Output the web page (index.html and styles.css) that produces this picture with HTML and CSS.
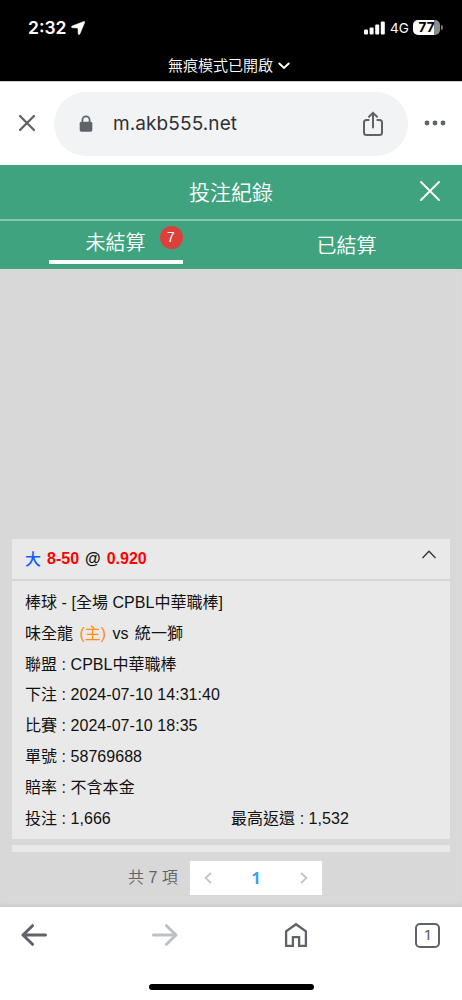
FILE: index.html
```html
<!DOCTYPE html>
<html lang="zh-Hant">
	<head>
		<meta charset="utf-8" />
		<meta name="viewport" content="width=device-width, initial-scale=1">
		<title>投注紀錄</title>
		<link rel="stylesheet" href="styles.css">
	</head>
	<body>
		<div class="status">
			<div class="status-top">
				<span class="time">2:32</span>
				<svg class="location" width="14" height="14" viewBox="0 0 14 14"><path d="M12.8 .5L1 5Q-.2 5.9 1 6.7L6.9 7.1L7.2 13Q7.9 14.3 8.9 13L13.7 1.4Q13.8 .2 12.8 .5Z" fill="#fff" stroke="#fff" stroke-width=".5"/></svg>
				<svg class="signal" width="21" height="14" viewBox="0 0 21 14" fill="#fff">
					<rect x="0" y="8.6" width="4" height="4.8" rx="1"/>
					<rect x="5.6" y="6.4" width="4" height="7" rx="1"/>
					<rect x="11.2" y="3.4" width="4" height="10" rx="1"/>
					<rect x="16.8" y="0.6" width="4" height="12.8" rx="1"/>
				</svg>
				<span class="net">4G</span>
				<div class="battery">77</div>
				<i class="battery-cap"></i>
			</div>
			<div class="private">
				<span>無痕模式已開啟</span>
				<svg width="12" height="8" viewBox="0 0 12 8"><path d="M1.3 1.5L6 6L10.7 1.5" fill="none" stroke="#fff" stroke-width="1.9" stroke-linecap="round"/></svg>
			</div>
		</div>

		<div class="address">
			<svg class="stop" width="18" height="18" viewBox="0 0 18 18"><path d="M2 2L16 16M16 2L2 16" stroke="#5f6368" stroke-width="2.3" stroke-linecap="round"/></svg>
			<div class="url">
				<svg class="lock" width="14" height="18" viewBox="0 0 14 18">
					<path d="M3.4 8V5a3.6 3.6 0 0 1 7.2 0V8" fill="none" stroke="#5f6368" stroke-width="1.7"/>
					<rect x=".7" y="6.7" width="12.6" height="10" rx="1.6" fill="#5f6368"/>
				</svg>
				<span>m.akb555.net</span>
				<svg class="share" width="20" height="26" viewBox="0 0 20 26" fill="none" stroke="#5f6368" stroke-width="2">
					<path d="M6.4 9H3.5Q1 9 1 11.5V21.5Q1 24 3.5 24H16.5Q19 24 19 21.5V11.5Q19 9 16.5 9H13.6"/>
					<path d="M10 16.5V2M6 5.8L10 1.8L14 5.8" stroke-linecap="round"/>
				</svg>
			</div>
			<svg class="more" width="22" height="6" viewBox="0 0 22 6" fill="#5f6368"><circle cx="3" cy="3" r="2.4"/><circle cx="11" cy="3" r="2.4"/><circle cx="19" cy="3" r="2.4"/></svg>
		</div>

		<div class="header">
			<span>投注紀錄</span>
			<svg class="close" width="20" height="20" viewBox="0 0 20 20"><path d="M1 1L19 19M19 1L1 19" stroke="#fff" stroke-width="1.8" stroke-linecap="round"/></svg>
		</div>
		<div class="tabs">
			<div class="tab on"><span>未結算</span><em class="badge">7</em></div>
			<div class="tab"><span>已結算</span></div>
		</div>

		<div class="list">
			<div class="bet">
				<div class="bet-title">
					<span class="blue">大</span>
					<span class="red">8-50</span>
					<span>@</span>
					<span class="red">0.920</span>
					<svg class="fold" width="14" height="9" viewBox="0 0 14 9"><path d="M.5 8L7 1.3L13.5 8" fill="none" stroke="#333" stroke-width="1.3"/></svg>
				</div>
				<div class="bet-body">
					<p>棒球 - [全場 CPBL中華職棒]</p>
					<p class="match">味全龍 <span class="home">(主)</span> vs 統一獅</p>
					<p>聯盟 : CPBL中華職棒</p>
					<p>下注 : 2024-07-10 14:31:40</p>
					<p>比賽 : 2024-07-10 18:35</p>
					<p>單號 : 58769688</p>
					<p>賠率 : 不含本金</p>
					<p class="money"><span>投注 : 1,666</span><span>最高返還 : 1,532</span></p>
				</div>
			</div>
			<div class="strip"></div>
			<div class="pages">
				<span class="total">共 7 項</span>
				<div class="pager">
					<svg width="8" height="12" viewBox="0 0 8 12"><path d="M7 1L1.5 6L7 11" fill="none" stroke="#c0c4cc" stroke-width="1.7"/></svg>
					<b>1</b>
					<svg width="8" height="12" viewBox="0 0 8 12"><path d="M1 1L6.5 6L1 11" fill="none" stroke="#c0c4cc" stroke-width="1.7"/></svg>
				</div>
			</div>
		</div>

		<div class="toolbar">
			<div class="tools">
				<svg width="26" height="22" viewBox="0 0 26 22"><path d="M24.5 11H2M11.5 1.7L2 11L11.5 20.3" fill="none" stroke="#5f6368" stroke-width="3" stroke-linecap="round" stroke-linejoin="round"/></svg>
				<svg width="26" height="22" viewBox="0 0 26 22"><path d="M1.5 11H24M14.5 1.7L24 11L14.5 20.3" fill="none" stroke="#bdc1c6" stroke-width="3" stroke-linecap="round" stroke-linejoin="round"/></svg>
				<svg class="house" width="24" height="26" viewBox="0 0 24 26"><path d="M2.1 23.9V9.4L12 2.2L21.9 9.4V23.9H15.1V15.1H8.9V23.9Z" fill="none" stroke="#5f6368" stroke-width="2.3"/></svg>
				<div class="count">1</div>
			</div>
			<div class="bar"></div>
		</div>
	</body>
</html>
```

FILE: styles.css
```css
*{
	margin:0;
	padding:0;
	box-sizing:border-box;
}
body{
	width:462px;
	height:1000px;
	display:flex;
	flex-direction:column;
	overflow:hidden;
	background:#fff;
	font-family:"Liberation Sans","Noto Sans CJK TC",sans-serif;
}
svg{
	display:block;
	flex:none;
}
.status{
	height:81px;
	background:#000;
	color:#fff;
}
.status-top{
	height:55px;
	padding:0 19px 0 28px;
	display:flex;
	align-items:center;
	font-family:Inter,sans-serif;
}
.time{
	width:43px;
	font-size:17.5px;
	font-weight:600;
}
.signal{
	margin-left:auto;
}
.net{
	width:18px;
	margin:0 5px;
	font-size:13.5px;
	white-space:nowrap;
}
.battery{
	width:27px;
	height:15px;
	border-radius:5px;
	background:linear-gradient(90deg,#fff 77%,#8b8b8b 77%);
	color:#000;
	font-size:13.5px;
	font-weight:700;
	line-height:15px;
	text-align:center;
}
.battery-cap{
	width:2px;
	height:5px;
	margin-left:1px;
	border-radius:0 2px 2px 0;
	background:#777;
}
.private{
	height:22px;
	display:flex;
	align-items:center;
	justify-content:center;
	gap:5px;
	padding-right:4px;
	font-size:15px;
	font-weight:350;
	line-height:22px;
}
.address{
	height:84px;
	border-top:1px solid #ccc;
	padding:0 16px 0 18px;
	display:flex;
	align-items:center;
	color:#303134;
}
.stop,.more{
	margin-bottom:1px;
}
.url{
	width:354px;
	height:64px;
	margin:0 16px 0 18px;
	padding:0 25px;
	display:flex;
	align-items:center;
	border-radius:32px;
	background:#f1f3f4;
	font-family:Inter,sans-serif;
	font-size:19px;
}
.url span{
	margin-left:20px;
	letter-spacing:.1px;
}
.share{
	margin-left:auto;
}
.header{
	position:relative;
	height:56px;
	border-bottom:2px solid #8fc5b0;
	background:#40a380;
	color:#fff;
	font-size:21px;
	font-weight:350;
	line-height:56px;
	text-align:center;
}
.close{
	position:absolute;
	top:16px;
	right:22px;
}
.tabs{
	height:48px;
	display:flex;
	justify-content:space-around;
	background:#40a380;
	color:#fff;
	font-size:20px;
	font-weight:350;
}
.tab{
	position:relative;
	width:134px;
	height:43px;
	line-height:51px;
	text-align:center;
}
.tab.on{
	border-bottom:4px solid #fff;
	line-height:44px;
}
.badge{
	position:absolute;
	top:5px;
	right:0;
	width:23px;
	height:23px;
	border-radius:50%;
	background:#db413a;
	font-size:14px;
	font-style:normal;
	line-height:23px;
}
.list{
	flex:1;
	padding:270px 12px 0;
	background:#d8d8d8;
	box-shadow:inset 0 -4px 4px -3px #c4c4c4;
	color:#111;
	font-size:16px;
}
.bet,.strip{
	width:438px;
	background:#e9e9e9;
}
.bet-title{
	height:42px;
	padding:0 14px 0 13px;
	display:flex;
	align-items:center;
	gap:6px;
	border-bottom:2px solid #d6d6d6;
	font-weight:700;
}
.blue{
	margin-bottom:2px;
	color:#0a60ff;
	font-weight:500;
}
.red{
	color:#f00;
}
.fold{
	margin:0 0 9px auto;
}
.bet-body{
	height:258px;
	padding:7px 13px 0;
	letter-spacing:.04px;
}
.bet-body p{
	height:30.8px;
	line-height:30.8px;
	white-space:nowrap;
}
.match{
	word-spacing:1.8px;
}
.home{
	color:#ff8d12;
}
.bet-body .money{
	display:grid;
	grid-template-columns:1fr 1fr;
}
.strip{
	height:7px;
	margin-top:6px;
}
.pages{
	height:34px;
	margin-top:9px;
	display:flex;
	padding-left:116px;
	line-height:34px;
}
.total{
	width:62px;
	color:#606266;
	font-weight:350;
	white-space:nowrap;
}
.pager{
	width:132px;
	padding:0 14px;
	display:flex;
	align-items:center;
	justify-content:space-between;
	background:#fff;
	color:#409eff;
	font-family:"Noto Sans",sans-serif;
	font-size:16px;
}
.toolbar{
	height:93px;
	background:#fff;
}
.tools{
	height:56px;
	padding:0 22px 0 21px;
	display:flex;
	align-items:center;
	justify-content:space-between;
}
.house{
	margin-right:2px;
}
.count{
	width:25px;
	height:25px;
	border:2px solid #5f6368;
	border-radius:5px;
	color:#5f6368;
	font-family:Inter,sans-serif;
	font-size:13px;
	font-weight:500;
	line-height:21px;
	text-align:center;
}
.bar{
	width:165px;
	height:6px;
	margin:21px auto 0;
	border-radius:3px;
	background:#000;
}
```
